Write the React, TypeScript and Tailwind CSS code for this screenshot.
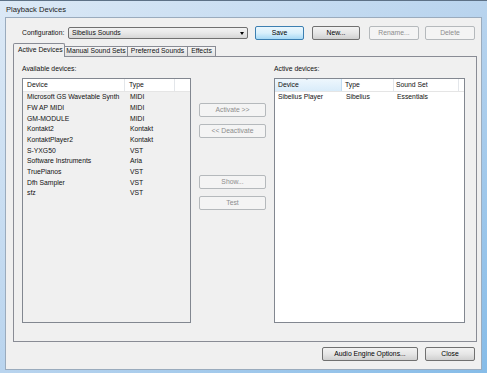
import React from 'react'

type BtnProps = {
  label: string
  className: string
  disabled?: boolean
  primary?: boolean
}

function Btn({ label, className, disabled, primary }: BtnProps) {
  const tone = primary
    ? 'border-[#3c7fb1] bg-gradient-to-b from-[#eaf6fd] via-[#d9f0fc] to-[#a7d9f5] text-black'
    : disabled
      ? 'border-[#b5b9bc] bg-[#f4f4f4] text-[#8d8d8d]'
      : 'border-[#707070] bg-gradient-to-b from-[#f2f2f2] via-[#e6e6e6] to-[#d0d0d0] text-black'
  return (
    <div
      className={`flex h-[14px] shrink-0 items-center justify-center rounded-[2px] border ${tone} ${className}`}
    >
      <span className="leading-none">{label}</span>
    </div>
  )
}

const available = [
  ['Microsoft GS Wavetable Synth', 'MIDI'],
  ['FW AP MIDI', 'MIDI'],
  ['GM-MODULE', 'MIDI'],
  ['Kontakt2', 'Kontakt'],
  ['KontaktPlayer2', 'Kontakt'],
  ['S-YXG50', 'VST'],
  ['Software Instruments', 'Aria'],
  ['TruePianos', 'VST'],
  ['Dfh Sampler', 'VST'],
  ['sfz', 'VST'],
]

function Tab({ label, className, active }: { label: string; className: string; active?: boolean }) {
  if (active) {
    return (
      <div
        className={`relative z-10 -mb-px flex h-[14px] items-center rounded-t-[2px] border border-b-0 border-[#898c95] bg-[#f0f0f0] pl-[4px] ${className}`}
      >
        <span className="leading-none">{label}</span>
      </div>
    )
  }
  return (
    <div
      className={`flex h-[10px] items-center justify-center border border-b-0 border-l-0 border-[#898c95] bg-gradient-to-b from-[#f6f6f6] to-[#e2e2e2] ${className}`}
    >
      <span className="leading-none">{label}</span>
    </div>
  )
}

export default function App() {
  return (
    <div className="flex h-[373px] w-[487px] flex-col overflow-hidden border-t border-[#5d7186] bg-gradient-to-br from-[#dce9f6] via-[#b9d4ee] to-[#86bce8] font-['Liberation_Sans',Arial,sans-serif] text-[6.8px] text-[#111]">
      {/* title bar */}
      <div className="flex h-[16px] shrink-0 items-center pl-[6px] pt-[1px] text-[7.6px] text-[#1b1b1b]">
        Playback Devices
      </div>

      {/* client area */}
      <div className="ml-[5px] mr-[5px] mb-[3px] flex flex-1 flex-col border border-[#9aabbd] bg-[#f0f0f0]">
        {/* configuration row */}
        <div className="mt-[8px] flex items-center pl-[16px]">
          <div className="w-[46px] shrink-0">Configuration:</div>
          <div className="flex h-[12px] w-[180px] shrink-0 items-center justify-between rounded-[2px] border border-[#707070] bg-gradient-to-b from-[#f2f2f2] via-[#e8e8e8] to-[#d6d6d6] pl-[3px] pr-[3px]">
            <span className="leading-none">Sibelius Sounds</span>
            <span className="h-0 w-0 border-l-[2.5px] border-r-[2.5px] border-t-[3px] border-l-transparent border-r-transparent border-t-black" />
          </div>
          <Btn label="Save" primary className="ml-[7px] w-[49px]" />
          <Btn label="New..." className="ml-[8px] w-[48px]" />
          <Btn label="Rename..." disabled className="ml-[9px] w-[50px]" />
          <Btn label="Delete" disabled className="ml-[6px] w-[50px]" />
        </div>

        {/* tabs */}
        <div className="mt-[3px] flex items-end pl-[7px]">
          <Tab label="Active Devices" active className="w-[52px]" />
          <Tab label="Manual Sound Sets" className="w-[63px]" />
          <Tab label="Preferred Sounds" className="w-[60px]" />
          <Tab label="Effects" className="w-[28px]" />
        </div>

        {/* tab panel */}
        <div className="ml-[7px] flex h-[286px] w-[464px] border border-[#898c95] bg-[#f0f0f0] pl-[8px]">
          {/* available devices */}
          <div className="flex w-[169px] flex-col">
            <div className="mt-[9px] h-[12px] leading-none">Available devices:</div>
            <div className="flex h-[245px] flex-col border border-[#828790] bg-[#f0f0f0]">
              <div className="flex h-[13px] border-b border-[#e5e5e5] bg-white">
                <div className="flex w-[102px] items-center border-r border-[#e3e6ea] pl-[4px]">Device</div>
                <div className="flex w-[50px] items-center border-r border-[#e3e6ea] pl-[4px]">Type</div>
                <div className="flex-1" />
              </div>
              {available.map(([name, type]) => (
                <div key={name} className="flex h-[10.7px] items-center">
                  <div className="w-[102px] pl-[4px]">{name}</div>
                  <div className="pl-[5px]">{type}</div>
                </div>
              ))}
            </div>
          </div>

          {/* middle buttons */}
          <div className="flex w-[83px] flex-col items-center">
            <Btn label="Activate >>" disabled className="mt-[46px] w-[67px]" />
            <Btn label="<< Deactivate" disabled className="mt-[7px] w-[67px]" />
            <Btn label="Show..." disabled className="mt-[37px] w-[67px]" />
            <Btn label="Test" disabled className="mt-[7px] w-[67px]" />
          </div>

          {/* active devices */}
          <div className="flex w-[191px] flex-col">
            <div className="mt-[9px] h-[12px] leading-none">Active devices:</div>
            <div className="flex h-[245px] flex-col border border-[#828790] bg-white">
              <div className="flex h-[13px] border-b border-[#e5e5e5] bg-white">
                <div className="relative flex w-[67px] items-center border-r border-[#c1dcf3] bg-gradient-to-b from-[#eef7fd] to-[#d9ecfa] pl-[3px]">
                  Device
                  <span className="absolute left-[31px] top-[0px] text-[5px] leading-none text-[#6f8aa6]">ˆ</span>
                </div>
                <div className="flex w-[52px] items-center border-r border-[#e3e6ea] pl-[3px]">Type</div>
                <div className="flex w-[65px] items-center border-r border-[#e3e6ea] pl-[2px]">Sound Set</div>
                <div className="flex-1" />
              </div>
              <div className="flex h-[10.7px] items-center">
                <div className="w-[67px] pl-[3px]">Sibelius Player</div>
                <div className="w-[52px] pl-[4px]">Sibelius</div>
                <div className="pl-[3px]">Essentials</div>
              </div>
            </div>
          </div>
        </div>

        {/* bottom buttons */}
        <div className="mt-[5px] flex justify-end pr-[6px]">
          <Btn label="Audio Engine Options..." className="w-[96px]" />
          <Btn label="Close" className="ml-[7px] w-[50px]" />
        </div>
      </div>
    </div>
  )
}
